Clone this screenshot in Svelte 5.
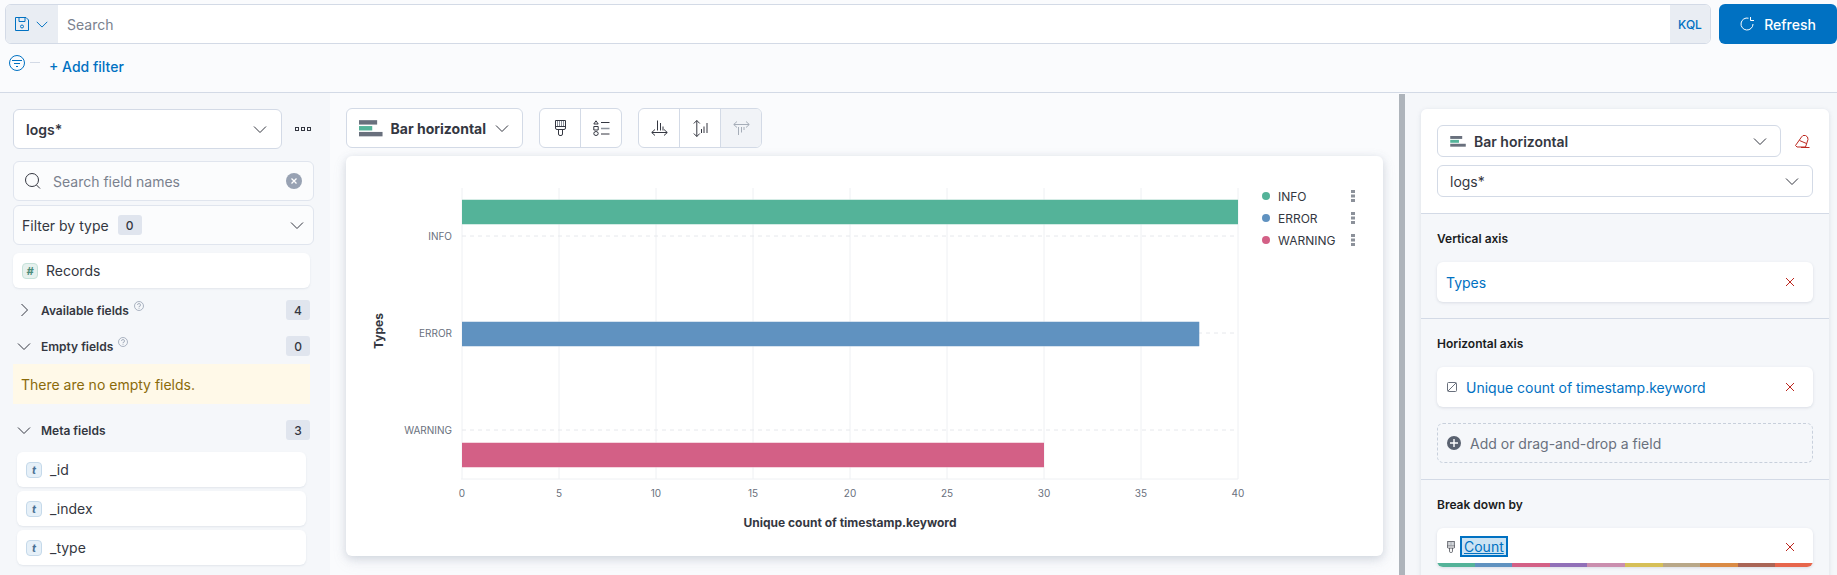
<script>
  const xTicks = [0, 5, 10, 15, 20, 25, 30, 35, 40];
  const xAt = (v) => 462 + v * 19.4;
  const bars = [
    { label: 'INFO', value: 40, color: '#54b399', edge: '#a9d9cc', y: 200, tick: 236 },
    { label: 'ERROR', value: 38, color: '#6092c0', edge: '#afc8df', y: 322, tick: 333 },
    { label: 'WARNING', value: 30, color: '#d36086', edge: '#e9afc2', y: 443, tick: 430 }
  ];
  const palette = ['#54b399', '#6092c0', '#d36086', '#9170b8', '#ca8eae', '#d6bf57', '#b9a888', '#da8b45', '#aa6556', '#e7664c'];
  const metaFields = ['_id', '_index', '_type'];
</script>

{#snippet chevronDown(size = 16)}
  <svg class="chev" width={size} height={size} viewBox="0 0 16 16"><path d="M2 5.500l6 6 6-6" fill="none" stroke="currentColor" stroke-width="1" /></svg>
{/snippet}

{#snippet barIcon(w, h)}
  <svg width={w} height={h} viewBox="0 0 24 17">
    <rect x="0" y="0" width="18.500" height="4.500" fill="#69707d" />
    <rect x="0" y="6" width="13.500" height="4.500" fill="#54b399" />
    <rect x="0" y="12" width="24" height="4.500" fill="#69707d" />
  </svg>
{/snippet}

{#snippet brush(w, h)}
  <svg width={w} height={h} viewBox="0 0 11 16" fill="none" stroke="#343741" stroke-width="1">
    <path d="M.5.500h10v7.500a1.500 1.500 0 0 1-1.500 1.500h-7a1.500 1.500 0 0 1-1.500-1.500zM.5 6.500h10M3.500 9.500v4.500a1.500 1.500 0 0 0 1.500 1.500h1a1.500 1.500 0 0 0 1.500-1.500V9.500" />
    <path d="M2.500 1v5M4.500 1v5M6.500 1v5M8.500 1v5" stroke="#8d939d" />
  </svg>
{/snippet}

{#snippet closeX()}
  <svg class="x" width="10" height="10" viewBox="0 0 10 10"><path d="M1 1l8 8M9 1L1 9" stroke="#bd271e" stroke-width="1" /></svg>
{/snippet}

{#snippet help()}
  <svg class="help" width="10" height="10" viewBox="0 0 10 10" fill="none" stroke="#98a2b3" stroke-width=".8"><circle cx="5" cy="5" r="4.500" /><path d="M3.500 4a1.500 1.500 0 1 1 1.500 1.500v.8M5 7v.8" /></svg>
{/snippet}

<div class="app">
  <header class="top">
    <div class="query-row">
      <div class="search">
        <button class="save">
          <svg width="14" height="14" viewBox="0 0 14 14" fill="none" stroke="#0071c2" stroke-width="1">
            <path d="M.5.500h10.500l2.500 2.500v10.500H.5zM4 .5v4h6v-4" />
            <circle cx="7" cy="9.500" r="1.500" />
          </svg>
          <svg width="14" height="14" viewBox="0 0 16 16"><path d="M2 5.500l6 6 6-6" fill="none" stroke="#0071c2" stroke-width="1.100" /></svg>
        </button>
        <span class="placeholder">Search</span>
        <span class="kql">KQL</span>
      </div>
      <button class="refresh">
        <svg width="14" height="14" viewBox="0 0 14 14" fill="none" stroke="#fff" stroke-width="1">
          <path d="M8.500 1.200A6 6 0 1 0 13 7" /><path d="M10.500 0v3.500h3.500" />
        </svg>
        <span>Refresh</span>
      </button>
    </div>
    <div class="filter-row">
      <svg width="16" height="16" viewBox="0 0 16 16" fill="none" stroke="#0071c2" stroke-width="1">
        <circle cx="8" cy="8" r="7.500" /><path d="M3 5.500h10M5 8.500h6M7 11.500h2" />
      </svg>
      <span class="dash"></span>
      <span class="add-filter">+ Add filter</span>
    </div>
  </header>

  <main class="main">
    <aside class="left">
      <div class="index-row">
        <button class="index-btn"><span>logs*</span>{@render chevronDown()}</button>
        <svg class="dots" width="16" height="4" viewBox="0 0 16 4" fill="none" stroke="#343741"><rect x=".5" y=".5" width="3" height="3" /><rect x="6.500" y=".5" width="3" height="3" /><rect x="12.500" y=".5" width="3" height="3" /></svg>
      </div>

      <div class="field-search">
        <svg width="16" height="16" viewBox="0 0 16 16" fill="none" stroke="#343741"><circle cx="7" cy="7" r="6.500" /><path d="M11.500 12l3.500 3.500" /></svg>
        <span>Search field names</span>
        <svg class="clear" width="16" height="16" viewBox="0 0 16 16"><circle cx="8" cy="8" r="8" fill="#98a2b3" /><path d="M5.500 5.500l5 5M10.500 5.500l-5 5" stroke="#fff" stroke-width="1.300" /></svg>
      </div>
      <div class="filter-type">
        <span>Filter by type</span><span class="badge">0</span>
        <span class="grow"></span>{@render chevronDown()}
      </div>

      <div class="field records"><span class="token num">#</span>Records</div>

      <div class="acc first">
        <svg class="acc-chev" width="16" height="16" viewBox="0 0 16 16"><path d="M5.500 2l6 6-6 6" fill="none" stroke="#343741" /></svg>
        <b>Available fields</b>{@render help()}
        <span class="grow"></span><span class="badge">4</span>
      </div>
      <div class="acc second">
        <svg class="acc-chev" width="16" height="16" viewBox="0 0 16 16"><path d="M2 5.500l6 6 6-6" fill="none" stroke="#343741" /></svg>
        <b>Empty fields</b>{@render help()}
        <span class="grow"></span><span class="badge">0</span>
      </div>
      <div class="notice">There are no empty fields.</div>
      <div class="acc third">
        <svg class="acc-chev" width="16" height="16" viewBox="0 0 16 16"><path d="M2 5.500l6 6 6-6" fill="none" stroke="#343741" /></svg>
        <b>Meta fields</b>
        <span class="grow"></span><span class="badge">3</span>
      </div>
      <div class="meta-list">
        {#each metaFields as f}
          <div class="field meta"><span class="token str">t</span>{f}</div>
        {/each}
      </div>
    </aside>

    <section class="center">
      <div class="toolbar">
        <button class="chart-switch">
          {@render barIcon(24, 17)}
          <b>Bar horizontal</b>
          {@render chevronDown()}
        </button>
        <div class="group">
          <button class="tool">{@render brush(11, 16)}</button>
          <button class="tool">
            <svg width="17" height="16" viewBox="0 0 17 16" fill="none" stroke="#343741"><path d="M3 .8l2.200 3.200h-4.400zM.8 6.500h4.400v3.500H.8zM5.200 13.500a2.200 2 0 1 1-4.400 0 2.200 2 0 1 1 4.400 0z" /><path d="M8 2.500h8.500M8 14h8.500" /><path d="M8 8.500h8.500" stroke="#8d939d" stroke-width="1.500" /></svg>
          </button>
        </div>
        <div class="group">
          <button class="tool">
            <svg width="17" height="16" viewBox="0 0 17 16" fill="none" stroke="#343741"><path d="M6.500 .5v10M9.500 3v7.500M12 6.500v4" /><path d="M4 9.500l-3.300 3 3.300 3M13 9.500l3.300 3-3.300 3M1 12.500h15" /></svg>
          </button>
          <button class="tool">
            <svg width="15" height="17" viewBox="0 0 15 17" fill="none" stroke="#343741"><path d="M.8 3.500l3-3 3 3M.8 13.500l3 3 3-3M3.800 .5v16" /><path d="M8.500 9v4M11 6.500v6.500M14 3v10" /></svg>
          </button>
          <button class="tool disabled">
            <svg width="17" height="14" viewBox="0 0 17 14" fill="none" stroke="#a6adb8"><path d="M4 .5l-3.300 3 3.300 3M13 .5l3.300 3-3.300 3M1 3.500h15" /><path d="M5.500 6v8M8.500 6v5.500M11 6v3" /></svg>
          </button>
        </div>
      </div>

      <div class="chart-card">
        <svg class="chart" width="1037" height="400" viewBox="346 156 1037 400">
          {#each xTicks as t}
            <line x1={xAt(t)} x2={xAt(t)} y1="188" y2="479" stroke="#eef0f3" stroke-width="1" />
            <text class="tick" x={xAt(t)} y="497" text-anchor="middle">{t}</text>
          {/each}
          <line x1="461" x2="1238" y1="479" y2="479" stroke="#eef0f3" />
          {#each bars as b}
            <line x1="462" x2="1238" y1={b.tick} y2={b.tick} stroke="#e6e8ec" stroke-dasharray="4 4" />
            <rect x="462" y={b.y - 0.5} width={b.value * 19.4} height="25" fill={b.edge} />
            <rect x="462" y={b.y} width={b.value * 19.4} height="24" fill={b.color} />
            <text class="tick" x="452" y={b.tick + 4} text-anchor="end">{b.label}</text>
          {/each}
          <text class="axis" x="383" y="331" text-anchor="middle" transform="rotate(-90 383 331)">Types</text>
          <text class="axis" x="850" y="527" text-anchor="middle">Unique count of timestamp.keyword</text>
        </svg>
        <ul class="legend">
          {#each bars as b}
            <li>
              <i style="background:{b.color}"></i><span>{b.label}</span>
              <svg width="4" height="12" viewBox="0 0 4 12"><rect y="0" width="4" height="3" fill="#8c919a" /><rect y="4.500" width="4" height="3" fill="#8c919a" /><rect y="9" width="4" height="3" fill="#8c919a" /></svg>
            </li>
          {/each}
        </ul>
      </div>
    </section>

    <div class="splitter"></div>

    <aside class="right">
      <div class="config">
        <div class="config-head">
          <div class="sel-row">
            <button class="select type">
              {@render barIcon(16, 11)}
              <b>Bar horizontal</b>
              <span class="grow"></span>{@render chevronDown()}
            </button>
            <svg class="eraser" width="15" height="13" viewBox="0 0 15 13" fill="none" stroke="#bd271e"><path d="M.5 10.500L6.500 2l1.500-1.500h2.500l2 1.500.5 2.500-2.500 7.500H2zM4.500 5.500l7 3M6 12.500h8.500" /></svg>
          </div>
          <button class="select index"><span>logs*</span><span class="grow"></span>{@render chevronDown()}</button>
        </div>

        <div class="dim">
          <h4>Vertical axis</h4>
          <div class="dim-card"><a href="#top">Types</a><span class="grow"></span>{@render closeX()}</div>
        </div>

        <div class="dim">
          <h4>Horizontal axis</h4>
          <div class="dim-card">
            <svg class="dim-icon" width="10" height="10" viewBox="0 0 10 10" fill="none" stroke="#69707d"><rect x=".5" y=".5" width="9" height="9" rx="1" /><path d="M1 9l8-8" /></svg>
            <a href="#top">Unique count of timestamp.keyword</a><span class="grow"></span>{@render closeX()}
          </div>
          <div class="add-field">
            <svg width="14" height="14" viewBox="0 0 14 14"><circle cx="7" cy="7" r="7" fill="#5a6270" /><path d="M7 3v8M3 7h8" stroke="#fff" stroke-width="1.400" /></svg>
            <span>Add or drag-and-drop a field</span>
          </div>
        </div>

        <div class="dim last">
          <h4>Break down by</h4>
          <div class="dim-card colored">
            <span class="dim-icon">{@render brush(8, 12)}</span>
            <a class="focus" href="#top">Count</a><span class="grow"></span>{@render closeX()}
            <div class="strip">
              {#each palette as c}<i style="background:{c}"></i>{/each}
            </div>
          </div>
        </div>
      </div>
    </aside>
  </main>
</div>

<style>
  :global(body) { margin: 0; background: #fafbfd; }
  * { box-sizing: border-box; }
  button { font: inherit; color: inherit; background: none; border: 0; padding: 0; margin: 0; }
  .grow { flex: 1; }
  .chev { color: #343741; flex: none; }

  .app {
    width: 1837px; height: 575px; overflow: hidden;
    display: flex; flex-direction: column;
    font-family: Inter, "Liberation Sans", sans-serif;
    font-size: 14px; color: #343741; background: #fafbfd;
  }

  .top { height: 93px; padding: 4px 0 0 5px; border-bottom: 1px solid #d3dae6; flex: none; }
  .query-row { display: flex; gap: 8px; height: 40px; }
  .search {
    width: 1706px; display: flex; align-items: center; background: #fff;
    border: 1px solid #d3dae6; border-radius: 6px; overflow: hidden;
  }
  .save { width: 52px; height: 100%; background: #e9edf3; display: flex; align-items: center; padding-left: 9px; gap: 6px; flex: none; }
  .placeholder { flex: 1; padding-left: 9px; color: #7a818e; }
  .kql { width: 40px; height: 100%; background: #e9edf3; color: #0071c2; font-size: 12px; font-weight: 500; display: flex; align-items: center; justify-content: center; }
  .refresh { width: 118px; background: #0071c2; color: #fff; border-radius: 6px; font-weight: 500; display: flex; align-items: center; justify-content: center; gap: 10px; }
  .filter-row { display: flex; align-items: center; height: 24px; margin-top: 10px; padding-left: 4px; }
  .filter-row svg { margin-top: -6px; }
  .dash { width: 10px; height: 1px; background: #d3dae6; margin: -8px 0 0 5px; }
  .add-filter { margin-left: 9px; color: #0071c2; font-weight: 500; font-size: 14px; }

  .main { flex: 1; display: flex; min-height: 0; }

  .left { width: 330px; flex: none; background: #f5f7fa; padding: 16px 16px 0 13px; }
  .index-row { display: flex; align-items: center; gap: 12px; height: 40px; }
  .index-btn { width: 269px; height: 40px; display: flex; align-items: center; justify-content: space-between; padding: 0 13px 0 12px; background: #fff; border: 1px solid #d3dae6; border-radius: 6px; font-weight: 600; }
  .dots { margin-left: 1px; }
  .field-search, .filter-type { width: 301px; height: 40px; display: flex; align-items: center; background: #fbfcfd; border: 1px solid #e0e5ee; border-radius: 6px; }
  .field-search { margin-top: 12px; padding: 0 11px; color: #7a818e; gap: 12px; }
  .clear { margin-left: auto; }
  .filter-type { margin-top: 4px; padding: 0 8px; color: #343741; gap: 9px; }
  .badge { width: 24px; height: 20px; border-radius: 3px; background: #e0e5ee; display: flex; align-items: center; justify-content: center; font-size: 12px; font-weight: 500; }

  .field { display: flex; align-items: center; background: #fff; border-radius: 6px; box-shadow: 0 1px 2px rgba(152,162,179,.2); height: 35px; gap: 8px; }
  .records { width: 297px; margin-top: 8px; padding-left: 9px; }
  .token { width: 16px; height: 16px; border-radius: 4px; display: flex; align-items: center; justify-content: center; font-size: 11px; font-style: italic; font-weight: 700; flex: none; border: 1px solid; }
  .token.num { background: #e6f1ee; border-color: #c6e2da; color: #4c8c7a; }
  .token.str { background: #e6f0f8; border-color: #c5d9ea; color: #4a7194; }

  .acc { width: 297px; height: 20px; display: flex; align-items: center; font-size: 12px; }
  .acc b { font-weight: 600; margin-left: 9px; }
  .acc-chev { margin-left: 3px; flex: none; }
  .help { margin: -8px 0 0 5px; }
  .acc.first { margin-top: 12px; }
  .acc.second { margin-top: 16px; }
  .acc.third { margin-top: 16px; }
  .notice { width: 297px; height: 40px; margin-top: 8px; background: #fff9e8; color: #8a6a0a; display: flex; align-items: center; padding-left: 8px; }
  .meta-list { margin: 12px 0 0 4px; display: flex; flex-direction: column; gap: 4px; }
  .meta { width: 289px; padding-left: 9px; }

  .center { width: 1069px; flex: none; padding: 15px 0 0 16px; background: #fafbfd; }
  .toolbar { display: flex; height: 40px; gap: 16px; }
  .chart-switch { width: 177px; height: 40px; display: flex; align-items: center; padding: 0 12px; gap: 8px; justify-content: space-between; background: #fff; border: 1px solid #d3dae6; border-radius: 6px; }
  .chart-switch b { font-weight: 700; white-space: nowrap; }
  .group { display: flex; height: 40px; background: #fff; border: 1px solid #d3dae6; border-radius: 6px; overflow: hidden; }
  .tool { width: 41px; display: flex; align-items: center; justify-content: center; border-left: 1px solid #d3dae6; }
  .tool:first-child { border-left: 0; width: 40px; }
  .tool.disabled { background: #f1f3f7; }

  .chart-card { position: relative; width: 1037px; height: 400px; margin-top: 8px; background: #fff; border-radius: 6px; box-shadow: 0 2px 8px rgba(152,162,179,.35), 0 6px 14px rgba(152,162,179,.15); }
  .chart { display: block; }
  .tick { font-size: 10px; fill: #69707d; font-family: Inter, sans-serif; }
  .axis { font-size: 12px; font-weight: 700; fill: #343741; font-family: Inter, sans-serif; }
  .legend { position: absolute; left: 916px; top: 29px; margin: 0; padding: 0; list-style: none; font-size: 12px; }
  .legend li { display: flex; align-items: center; height: 22px; width: 93px; }
  .legend i { width: 8px; height: 8px; border-radius: 50%; margin-right: 8px; flex: none; }
  .legend span { flex: 1; }

  .splitter { width: 6px; flex: none; background: #aeb4bb; margin-top: 1px; }

  .right { flex: 1; background: #f5f7fa; padding: 16px 8px 0 16px; }
  .config { background: #f5f7fa; border-radius: 6px 6px 0 0; box-shadow: 0 1px 4px rgba(152,162,179,.3); }
  .config-head { background: #fff; padding: 16px 16px 16px; border-bottom: 1px solid #d3dae6; border-radius: 6px 6px 0 0; }
  .sel-row { display: flex; align-items: center; gap: 14px; }
  .select { height: 32px; display: flex; align-items: center; background: #fff; border: 1px solid #d3dae6; border-radius: 6px; padding: 0 12px; text-align: left; }
  .select.type { width: 344px; gap: 8px; }
  .select.type b { font-weight: 600; }
  .select.index { width: 376px; margin-top: 8px; }
  .eraser { flex: none; }
  .dim { padding: 16px 16px 16px; border-bottom: 1px solid #d3dae6; }
  .dim.last { border-bottom: 0; }
  .dim h4 { margin: 0 0 14px; font-size: 12px; line-height: 18px; font-weight: 600; color: #1a1c21; }
  .dim-card { position: relative; height: 40px; background: #fff; border-radius: 6px; box-shadow: 0 1px 3px rgba(152,162,179,.3); display: flex; align-items: center; padding: 0 18px 0 9px; }
  .dim-card a { color: #0071c2; text-decoration: none; }
  .dim-icon { margin: 0 9px 0 1px; display: flex; }
  .x { flex: none; }
  .colored { height: 39px; overflow: hidden; padding-bottom: 2px; }
  .focus { outline: 2px solid #0071c2; text-decoration: underline !important; background: #cce3f3; padding: 0 2px; margin-left: -2px; }
  .strip { position: absolute; left: 0; right: 0; bottom: 0; height: 4px; display: flex; }
  .strip i { flex: 1; }
  .add-field { height: 40px; margin-top: 16px; border: 1px dashed #c8d0dc; border-radius: 6px; display: flex; align-items: center; gap: 9px; padding-left: 9px; color: #69707d; }
</style>
